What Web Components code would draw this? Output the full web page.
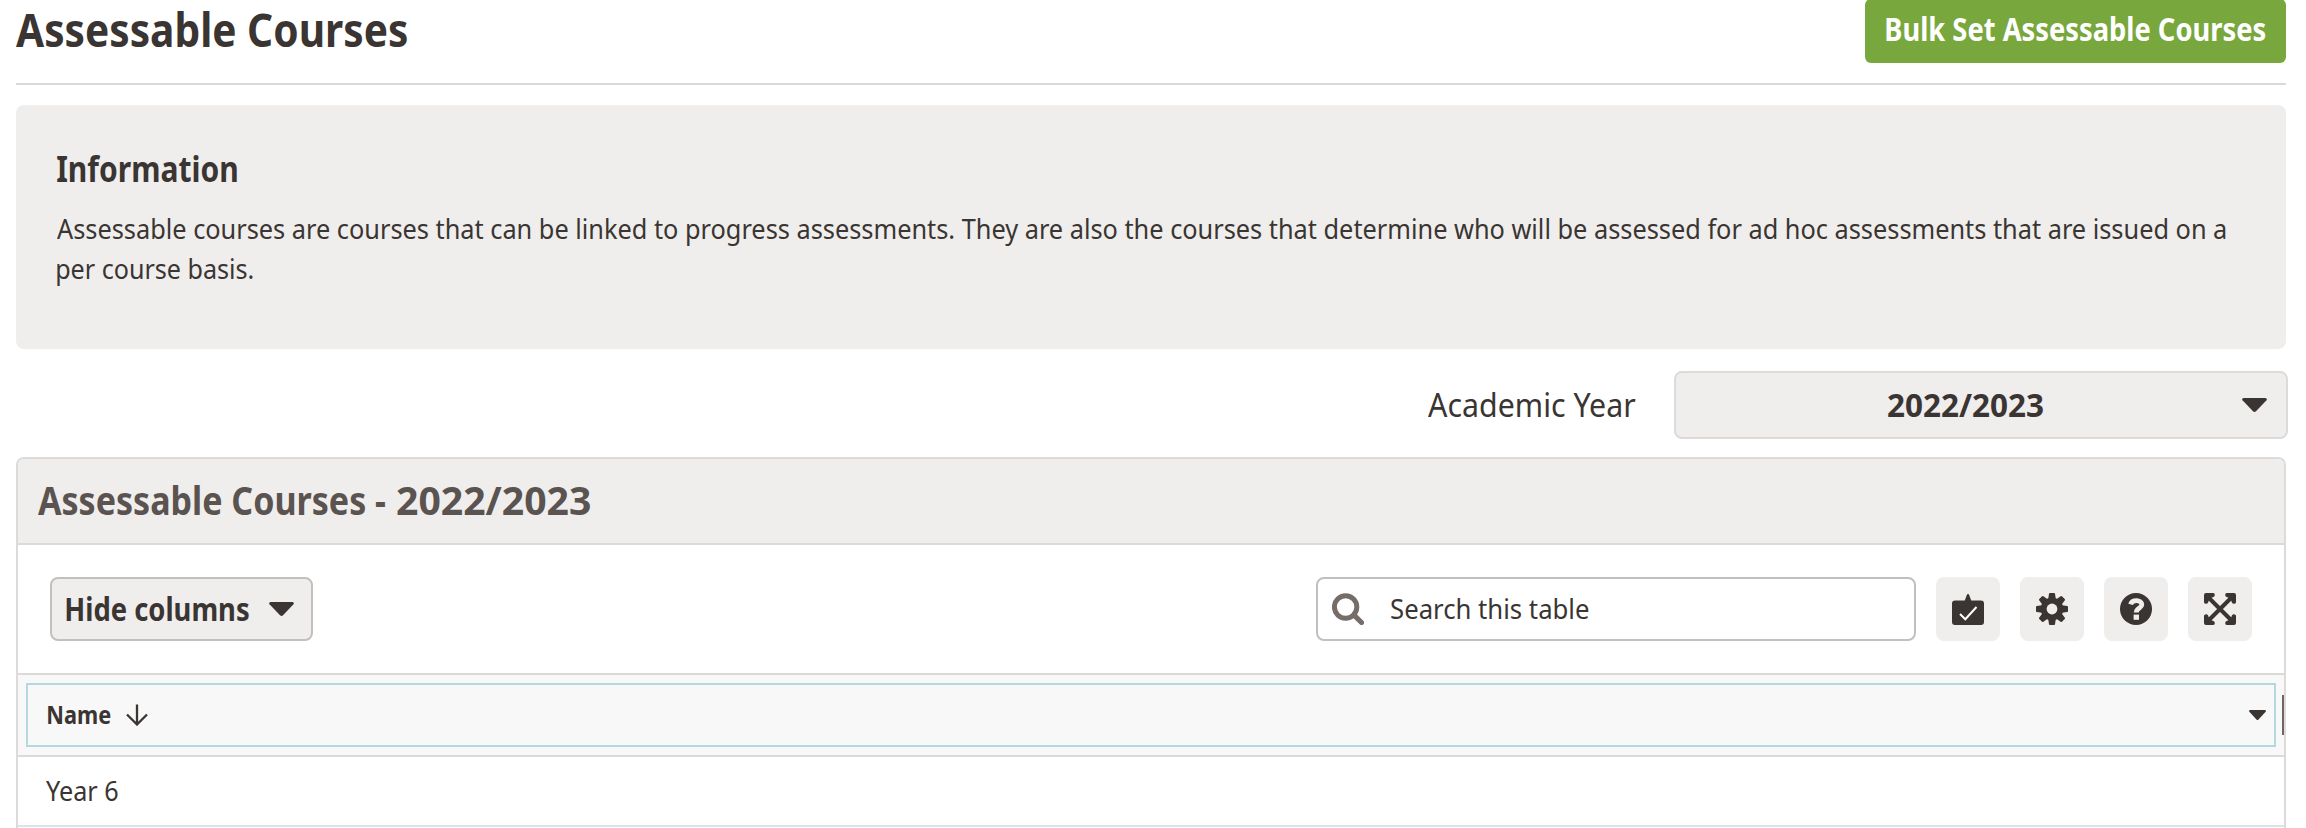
<!DOCTYPE html>
<html lang="en">
<head>
<meta charset="utf-8">
<title>Assessable Courses</title>
<style>
html{height:828px;overflow:hidden}
body{margin:0;height:828px;overflow:hidden;background:#fff;color:#3a3532;font-family:"Noto Sans","Open Sans",sans-serif}
</style>
</head>
<body>
<courses-page></courses-page>
<script>
const define=(name,html,init)=>customElements.define(name,class extends HTMLElement{
  constructor(){super();this.attachShadow({mode:'open'}).innerHTML=html}
  connectedCallback(){if(init)init.call(this,this.shadowRoot)}
});

/* Single line of text whose drawn width is set by its "w" attribute. */
const ctx=document.createElement('canvas').getContext('2d');
define('fit-text',`<style>
:host{display:block;flex:none;white-space:nowrap;line-height:40px}
span{display:inline-block;transform-origin:0 50%}
</style><span><slot></slot></span>`,function(root){
  const s=getComputedStyle(this),span=root.querySelector('span'),w=+this.getAttribute('w');
  ctx.font=`${s.fontWeight} ${s.fontSize} "Noto Sans"`;
  const m=ctx.measureText(this.textContent.trim());
  const k=w/(m.actualBoundingBoxLeft+m.actualBoundingBoxRight);
  this.style.width=w+'px';
  span.style.transform=`translateX(${m.actualBoundingBoxLeft*k}px) scaleX(${k})`;
});

define('caret-icon',`<style>
:host{display:block;flex:none;width:25px;height:14px}
svg{display:block;width:100%;height:100%}
</style><svg viewBox="0 0 25 14" preserveAspectRatio="none"><path fill="#3a3532" d="M1.6 0H23.4Q25.6 .5 24.5 2.3L14 13.2Q12.5 14.6 11 13.2L.5 2.3Q-.6 .5 1.6 0Z"/></svg>`);

define('primary-button',`<style>
:host{display:block;flex:none;box-sizing:border-box;width:421px;height:64px;margin-top:-1px;padding:1px 0 0 21px;background:#78a83d;border-radius:6px;color:#fff;font-size:31.4px;font-weight:700}
::slotted(*){line-height:57px!important}
</style><slot></slot>`);

define('page-header',`<style>
:host{display:flex;justify-content:space-between;align-items:flex-start;height:83px;border-bottom:2px solid #dad8d8}
fit-text.t{font-size:47px;font-weight:700;line-height:59px}
</style><fit-text class="t" w="391">Assessable Courses</fit-text>
<primary-button><fit-text w="379.5">Bulk Set Assessable Courses</fit-text></primary-button>`);

define('info-panel',`<style>
:host{display:block;box-sizing:border-box;height:244px;margin-top:20px;padding:38px 41px 0;background:#efeeec;border-radius:8px;font-size:27.5px}
::slotted([slot=title]){font-size:35.3px;font-weight:700;line-height:50px!important;margin:0 0 16px}
</style><slot name="title"></slot><slot></slot>`);

define('year-filter',`<style>
:host{display:flex;justify-content:flex-end;align-items:center;height:68px;margin:22px -2px 0 0}
.label{font-size:33.3px;margin:0 38px 3px 0}
.select{box-sizing:border-box;width:614px;height:68px;border:2px solid #dcdbda;border-radius:8px;background:#efeeec;display:flex;align-items:center;padding:0 19px 0 212px;justify-content:space-between;font-size:31.4px;font-weight:700}
</style><fit-text class="label" w="208">Academic Year</fit-text>
<div class="select"><fit-text w="155">2022/2023</fit-text><caret-icon></caret-icon></div>`);

define('menu-button',`<style>
:host{display:flex;box-sizing:border-box;align-items:center;justify-content:space-between;width:263px;height:64px;padding:0 17px 0 14px;border:2px solid #c2c0be;border-radius:8px;background:#efeeec;font-size:31.4px;font-weight:700}
</style><slot></slot><caret-icon></caret-icon>`);

define('search-box',`<style>
:host{display:flex;box-sizing:border-box;align-items:center;width:600px;height:64px;margin-left:auto;border:2px solid #c2c0be;border-radius:8px;background:#fff;font-size:27.5px;padding-left:14px}
svg{width:32px;height:32px;margin-right:27px}
</style><svg viewBox="0 0 32 32" fill="none" stroke="#766d69"><circle cx="13.6" cy="14" r="11.2" stroke-width="5"/><path d="M22 22.2l7.5 7.3" stroke-width="5.2" stroke-linecap="round"/></svg><slot></slot>`);

const glyphs={
  tray:`<path fill="#3a3532" d="M14.6 2.6Q16 -1.2 17.4 2.6L19.2 7.5H29Q32 7.5 32 10.5V29Q32 32 29 32H3Q0 32 0 29V10.5Q0 7.5 3 7.5H12.8Z"/><path d="M8 21l5.3 5.2L24.5 14" fill="none" stroke="#fff" stroke-width="2"/>`,
  gear:`<g fill="#3a3532">${[0,45,90,135].map(a=>`<path transform="rotate(${a} 16 16)" d="M13 .8Q13 0 14 0H18Q19 0 19 .8L19.8 6V26L19 31.2Q19 32 18 32H14Q13 32 13 31.2L12.2 26V6Z" />`).join('')}<circle cx="16" cy="16" r="11.3"/></g><circle cx="16" cy="16" r="5.4" fill="#efeeec"/>`,
  help:`<circle cx="16" cy="16" r="16" fill="#3a3532"/><path d="M10.6 11.3C12 6.5 21.8 6.4 21.8 11.7C21.8 15 16.3 15.1 16.3 19.5" fill="none" stroke="#efeeec" stroke-width="4.8"/><path fill="#efeeec" d="M13.6 21.6h5.4v5.2h-5.4z"/>`,
  expand:`<path d="M5 5L27 27M27 5L5 27" stroke="#3a3532" stroke-width="4"/><g fill="#3a3532">${[0,90,180,270].map(a=>`<path transform="rotate(${a} 16 16)" d="M2 0H9.3Q10.8 .2 10.8 2Q10.8 3.6 9.4 4.1L7.4 4.8L4.8 7.4L4.1 9.4Q3.6 10.8 2 10.8Q.2 10.8 0 9.3V2Q0 0 2 0Z"/>`).join('')}</g>`
};
define('icon-button',`<style>
:host{display:flex;align-items:center;justify-content:center;width:64px;height:64px;border-radius:8px;background:#efeeec}
svg{width:32px;height:32px}
</style><svg viewBox="0 0 32 32"></svg>`,function(root){root.querySelector('svg').innerHTML=glyphs[this.getAttribute('icon')]});

define('column-header',`<style>
:host{display:flex;box-sizing:border-box;height:82px;padding:8px 0 8px 8px;background:#f8f8f8;border-bottom:2px solid #dbdad9;align-items:center}
.cell{box-sizing:border-box;flex:1;height:64px;border:2px solid #b3d8e0;display:flex;align-items:center;padding:0 8px 0 20px;font-size:25.5px;font-weight:700}
::slotted(*){margin-bottom:2px}
svg{width:22px;height:22px;margin:0 auto 0 15px}
caret-icon{width:17px;height:10px}
.grip{width:2px;height:40px;margin-left:6px;background:#6f6663}
</style><div class="cell"><slot></slot><svg viewBox="0 0 22 22" fill="none" stroke="#3a3532" stroke-width="2.3"><path d="M11 .5V20M1 10.5L11 20.5L21 10.5"/></svg><caret-icon></caret-icon></div><div class="grip"></div>`);

define('table-row',`<style>
:host{display:flex;box-sizing:border-box;align-items:center;height:70px;border-bottom:2px solid #dde1ea;padding-left:28px;font-size:27.5px}
</style><slot></slot>`);

define('data-table',`<style>
:host{display:block;box-sizing:border-box;height:371px;margin-top:18px;border:2px solid #dcdbda;border-bottom:0;border-radius:8px 8px 0 0;overflow:hidden}
.head{display:flex;align-items:center;gap:11.5px;height:84px;box-sizing:border-box;padding:0 0 2px 20px;background:#efeeec;font-size:39.2px;font-weight:700;color:#5a5350}
.bar{display:flex;align-items:center;gap:20px;height:128px;padding:0 32px;border:solid #dbdad9;border-width:2px 0}
</style><div class="head"><slot name="title"></slot></div>
<div class="bar"><slot name="tools"></slot></div><slot></slot>`);

define('courses-page',`<style>
:host{display:block;width:2270px;height:828px;margin-left:16px}
</style>
<page-header></page-header>
<info-panel><fit-text slot="title" w="180">Information</fit-text>
<fit-text w="2169">Assessable courses are courses that can be linked to progress assessments. They are also the courses that determine who will be assessed for ad hoc assessments that are issued on a</fit-text>
<fit-text w="196">per course basis.</fit-text></info-panel>
<year-filter></year-filter>
<data-table>
<fit-text slot="title" w="347.5">Assessable Courses -</fit-text>
<fit-text slot="title" w="193">2022/2023</fit-text>
<menu-button slot="tools"><fit-text w="183">Hide columns</fit-text></menu-button>
<search-box slot="tools"><fit-text w="198">Search this table</fit-text></search-box>
<icon-button slot="tools" icon="tray"></icon-button>
<icon-button slot="tools" icon="gear"></icon-button>
<icon-button slot="tools" icon="help"></icon-button>
<icon-button slot="tools" icon="expand"></icon-button>
<column-header><fit-text w="63">Name</fit-text></column-header>
<table-row><fit-text w="72">Year 6</fit-text></table-row>
</data-table>`);
</script>
</body>
</html>
